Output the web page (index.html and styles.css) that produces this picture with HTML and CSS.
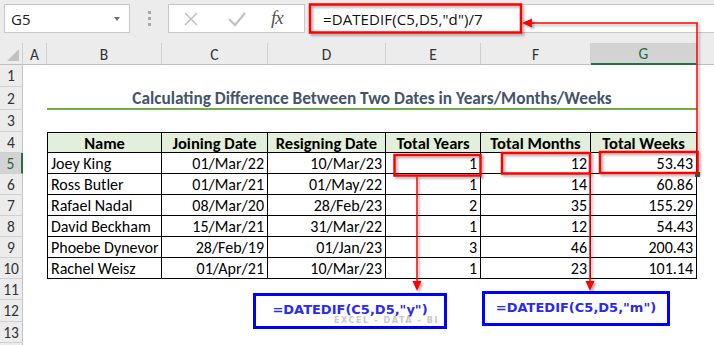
FILE: index.html
```html
<!DOCTYPE html>
<html>
<head>
<meta charset="utf-8">
<link rel="stylesheet" href="styles.css">
</head>
<body>
<div class="app">
  <div class="toolbar">
    <div class="namebox"><span class="ref">G5</span><span class="caret"></span></div>
    <div class="grip"><i></i><i></i><i></i></div>
    <div class="fxbox">
      <svg class="ico" width="16" height="16" viewBox="0 0 16 16"><path d="M2 2 L14 14 M14 2 L2 14" stroke="#c2c2c2" stroke-width="1.6" fill="none"/></svg>
      <svg class="ico" width="20" height="16" viewBox="0 0 20 16"><path d="M2 8 L8 14 L18 2" stroke="#c2c2c2" stroke-width="2.2" fill="none"/></svg>
      <span class="fx">fx</span>
    </div>
    <div class="formula">=DATEDIF(C5,D5,"d")/7</div>
  </div>

  <div class="sheet">
    <div class="corner"><span class="tri"></span></div>
    <div class="ch">A</div>
    <div class="ch">B</div>
    <div class="ch">C</div>
    <div class="ch">D</div>
    <div class="ch">E</div>
    <div class="ch">F</div>
    <div class="ch sel">G</div>
    <div class="ch last"></div>

    <div class="rh r1">1</div>
    <div class="rh r2">2</div>
    <div class="rh r3">3</div>
    <div class="rh r4">4</div>
    <div class="rh r5 sel">5</div>
    <div class="rh r6">6</div>
    <div class="rh r7">7</div>
    <div class="rh r8">8</div>
    <div class="rh r9">9</div>
    <div class="rh r10">10</div>
    <div class="rh r11">11</div>
    <div class="rh r12">12</div>
    <div class="rh r13">13</div>
    <div class="rh r14"></div>

    <div class="title">Calculating Difference Between Two Dates in Years/Months/Weeks</div>

    <div class="tbl">
      <div class="c h">Name</div><div class="c h">Joining Date</div><div class="c h">Resigning Date</div><div class="c h">Total Years</div><div class="c h">Total Months</div><div class="c h">Total Weeks</div>
      <div class="c">Joey King</div><div class="c n">01/Mar/22</div><div class="c n">10/Mar/23</div><div class="c n">1</div><div class="c n">12</div><div class="c n">53.43</div>
      <div class="c">Ross Butler</div><div class="c n">01/Mar/21</div><div class="c n">01/May/22</div><div class="c n">1</div><div class="c n">14</div><div class="c n">60.86</div>
      <div class="c">Rafael Nadal</div><div class="c n">08/Mar/20</div><div class="c n">28/Feb/23</div><div class="c n">2</div><div class="c n">35</div><div class="c n">155.29</div>
      <div class="c">David Beckham</div><div class="c n">15/Mar/21</div><div class="c n">31/Mar/22</div><div class="c n">1</div><div class="c n">12</div><div class="c n">54.43</div>
      <div class="c">Phoebe Dynevor</div><div class="c n">28/Feb/19</div><div class="c n">01/Jan/23</div><div class="c n">3</div><div class="c n">46</div><div class="c n">200.43</div>
      <div class="c">Rachel Weisz</div><div class="c n">01/Apr/21</div><div class="c n">10/Mar/23</div><div class="c n">1</div><div class="c n">23</div><div class="c n">101.14</div>
    </div>
  </div>

  <div class="callout cy">=DATEDIF(C5,D5,"y")<span class="wm">EXCEL - DATA - BI</span></div>
  <div class="callout cm">=DATEDIF(C5,D5,"m")</div>

  <svg class="overlay" width="714" height="345" viewBox="0 0 714 345">
    <defs>
      <filter id="sh" x="-20%" y="-20%" width="140%" height="140%">
        <feDropShadow dx="2" dy="2" stdDeviation="1.2" flood-color="#000" flood-opacity="0.3"/>
      </filter>
    </defs>
    <rect x="695" y="172" width="5" height="5" fill="#217346"/>
    <g filter="url(#sh)" fill="none" stroke="#ff0000">
      <rect x="310" y="4.5" width="211" height="28" stroke-width="2.5"/>
      <rect x="394.5" y="155" width="86" height="20.5" stroke-width="2.5"/>
      <rect x="502" y="153" width="88" height="20.5" stroke-width="2.5"/>
      <rect x="600" y="152" width="97.5" height="21" stroke-width="2.5"/>
      <polyline points="697,152 697,23 531,23" stroke-width="1.5"/>
      <line x1="417" y1="176.5" x2="417" y2="283" stroke-width="1.5"/>
      <line x1="590" y1="174.5" x2="590" y2="283" stroke-width="1.5"/>
    </g>
    <g filter="url(#sh)" fill="#ff0000">
      <polygon points="522,23 532,18.5 532,27.5"/>
      <polygon points="417,291 412.5,281 421.5,281"/>
      <polygon points="590,291 585.5,281 594.5,281"/>
    </g>
  </svg>
</div>
</body>
</html>
```

FILE: styles.css
```css
* { box-sizing: border-box; }
html, body { margin: 0; padding: 0; background: #ffffff; }
.app {
  position: relative;
  width: 714px;
  height: 345px;
  overflow: hidden;
  font-family: Carlito, Calibri, Lato, "Liberation Sans", sans-serif;
  color: #000;
}

/* toolbar */
.toolbar {
  height: 43px;
  background: #ececec;
  display: flex;
  align-items: flex-start;
  padding: 4px 0 0 4px;
}
.namebox {
  width: 126px;
  height: 29px;
  background: #fff;
  border: 1px solid #c8c8c8;
  display: flex;
  align-items: center;
  justify-content: space-between;
  padding: 0 9px 0 6px;
  font-family: "Open Sans", "Noto Sans", sans-serif;
  font-size: 15px;
  color: #222;
}
.caret {
  width: 0; height: 0;
  border-left: 3.5px solid transparent;
  border-right: 3.5px solid transparent;
  border-top: 4px solid #707070;
}
.grip {
  width: 38px;
  height: 29px;
  display: flex;
  flex-direction: column;
  align-items: center;
  justify-content: center;
  gap: 3px;
}
.grip i { display: block; width: 3px; height: 3px; background: #a8a8a8; }
.fxbox {
  width: 137px;
  height: 29px;
  background: #fff;
  border: 1px solid #c8c8c8;
  display: flex;
  align-items: center;
  padding: 0 0 0 14px;
  gap: 0;
}
.fxbox .ico:nth-child(1) { margin-right: 28px; }
.fxbox .ico:nth-child(2) { margin-right: 24px; }
.fx {
  font-family: "Liberation Serif", "DejaVu Serif", serif;
  font-style: italic;
  font-size: 19px;
  color: #555;
  letter-spacing: -1px;
  line-height: 1;
  margin-top: -3px;
}
.formula {
  flex: 1;
  height: 29px;
  margin-left: 4px;
  background: #fff;
  border: 1px solid #c8c8c8;
  border-right: none;
  display: flex;
  align-items: center;
  padding-left: 13px;
  font-family: "Open Sans", "Noto Sans", sans-serif;
  font-size: 15px;
  color: #111;
  letter-spacing: 0.1px;
}

/* sheet grid */
.sheet {
  display: grid;
  grid-template-columns: 23px 24px 115px 106px 118px 95px 110px 106px 1fr;
  grid-template-rows: 22px 22px 23px 22px 21px 21px 21px 21px 21px 21px 21px 21px 22px 21px 1fr;
  height: 302px;
  background: #fff;
}
.corner {
  background: #ececec;
  border-right: 1px solid #d0d0d0;
  border-bottom: 1px solid #bfbfbf;
  position: relative;
}
.tri {
  position: absolute;
  right: 3px;
  bottom: 3px;
  width: 0; height: 0;
  border-left: 12px solid transparent;
  border-bottom: 12px solid #c2c2c2;
}
.ch {
  background: #ececec;
  border-right: 1px solid #d0d0d0;
  border-bottom: 1px solid #bfbfbf;
  display: flex;
  align-items: center;
  justify-content: center;
  font-size: 15.5px;
  color: #333;
  padding-top: 1px;
}
.ch.sel {
  background: #d3d3d3;
  border-bottom: 2px solid #217346;
  color: #1e6b40;
}
.ch.last { border-right: none; }
.rh {
  grid-column: 1;
  background: #ececec;
  border-right: 1px solid #c4c4c4;
  border-bottom: 1px solid #d0d0d0;
  display: flex;
  align-items: center;
  justify-content: center;
  font-size: 15.5px;
  color: #333;
}
.rh.sel {
  background: #d3d3d3;
  border-right: 2px solid #217346;
  color: #1e6b40;
}
.r1 { grid-row: 2; } .r2 { grid-row: 3; } .r3 { grid-row: 4; } .r4 { grid-row: 5; }
.r5 { grid-row: 6; } .r6 { grid-row: 7; } .r7 { grid-row: 8; } .r8 { grid-row: 9; }
.r9 { grid-row: 10; } .r10 { grid-row: 11; } .r11 { grid-row: 12; } .r12 { grid-row: 13; }
.r13 { grid-row: 14; } .r14 { grid-row: 15; border-bottom: none; }

.title {
  grid-row: 3;
  grid-column: 3 / 9;
  border-bottom: 2px solid #70ad47;
  display: flex;
  align-items: center;
  justify-content: center;
  font-weight: bold;
  font-size: 17.3px;
  color: #44546a;
  padding-top: 1px;
}

.tbl {
  grid-row: 5 / 12;
  grid-column: 3 / 9;
  display: grid;
  grid-template-columns: 114px 106px 118px 95px 110px 106px;
  grid-template-rows: 20px repeat(6, 21px);
  border-left: 1px solid #000;
  border-top: 1px solid #000;
}
.c {
  border-right: 1px solid #000;
  border-bottom: 1px solid #000;
  display: flex;
  align-items: center;
  padding: 1px 3px 0 3px;
  font-size: 16px;
  white-space: nowrap;
  overflow: hidden;
}
.c.h {
  background: #e2efda;
  font-weight: bold;
  font-size: 16.5px;
  justify-content: center;
}
.c.n { justify-content: flex-end; }

/* callouts */
.callout {
  position: absolute;
  border: 3px solid #0000ff;
  background: #fff;
  display: flex;
  align-items: center;
  justify-content: center;
  font-family: "DejaVu Sans", "Liberation Sans", sans-serif;
  font-weight: bold;
  font-size: 13px;
  color: #2a2af0;
  white-space: nowrap;
}
.cy { left: 253px; top: 293px; width: 194px; height: 36px; padding-bottom: 3px; }
.cm { left: 482px; top: 291px; width: 188px; height: 35px; padding-bottom: 3px; }
.wm {
  position: absolute;
  left: 78px;
  bottom: 1px;
  font-size: 8px;
  letter-spacing: 1.6px;
  color: #c9c9c9;
  font-weight: bold;
}

.overlay {
  position: absolute;
  left: 0;
  top: 0;
  pointer-events: none;
}
```
